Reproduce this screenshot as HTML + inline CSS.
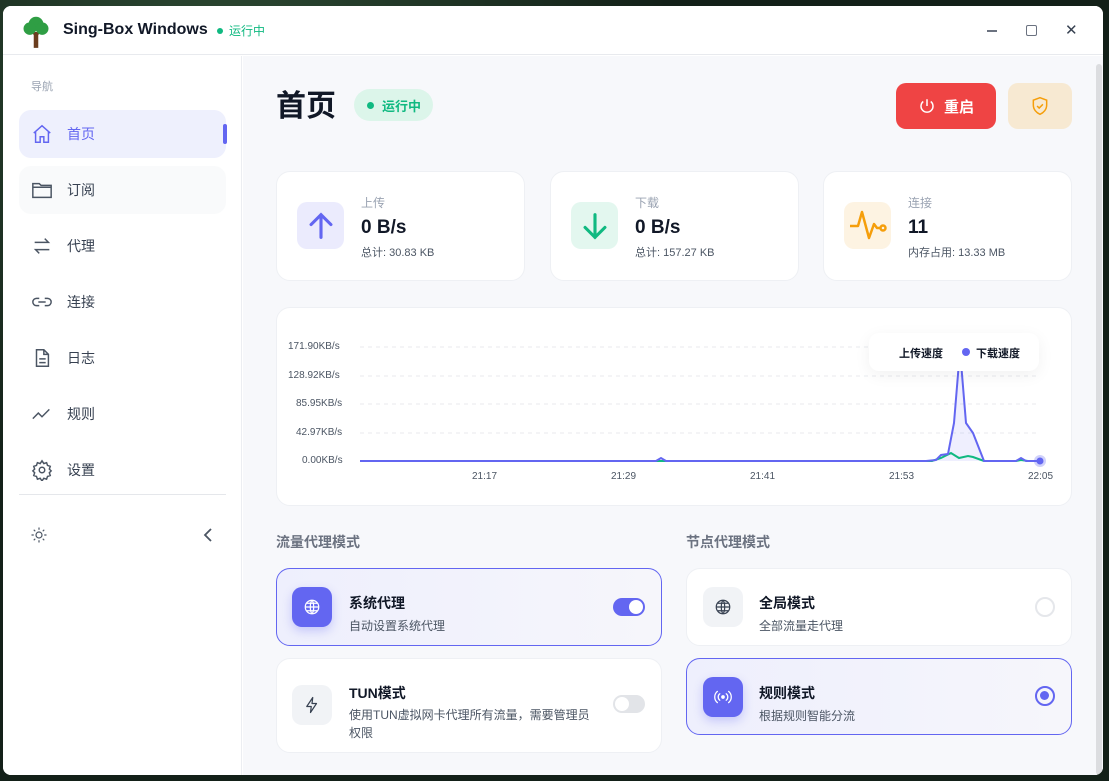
<!DOCTYPE html>
<html><head><meta charset="utf-8"><style>
*{box-sizing:border-box;margin:0;padding:0}
body{width:1109px;height:781px;overflow:hidden;background:#1b2a20;font-family:"Liberation Sans","Noto Sans CJK SC",sans-serif;position:relative}
.bgpat{position:absolute;inset:0;background:radial-gradient(circle at 20% 10%,#2d4a33 0,#132018 40%),#14221a}
.win{position:absolute;left:3px;top:6px;width:1100px;height:769px;background:#fff;border-radius:8px;overflow:hidden}
.title{position:absolute;left:0;top:0;width:100%;height:49px;border-bottom:1px solid #e8eaee;background:#fff}
.side{position:absolute;left:0;top:50px;width:239px;bottom:0;background:#fff;border-right:1px solid #eceef2}
.main{position:absolute;left:240px;top:50px;right:0;bottom:0;background:#f7f8fb}
.abs{position:absolute}
.nav{position:absolute;left:16px;width:207px;height:48px;border-radius:12px;display:flex;align-items:center;font-size:14px;color:#374151}
.nav svg{position:absolute;left:12px}
.nav span{position:absolute;left:48px}
.card{position:absolute;background:#fff;border-radius:14px;border:1px solid #eef0f4}
.ic{position:absolute;border-radius:10px;display:flex;align-items:center;justify-content:center}
.lab{font-size:12px;color:#9aa3b2}
.val{font-size:19px;font-weight:bold;color:#111827}
.sub{font-size:11px;color:#4b5563}
.ax{position:absolute;font-size:10px;color:#4b5563}
</style></head><body>
<div class="bgpat"></div>
<div class="win">
 <div class="title">
  <svg class="abs" style="left:18px;top:9px" width="30" height="34" viewBox="0 0 26 30"><path d="M11 15h4v14h-4z" fill="#6b3d1e"/><path d="M13 18l-4-3M13 18l4-3" stroke="#6b3d1e" stroke-width="1.5"/><circle cx="13" cy="8" r="6.5" fill="#2f9e44"/><circle cx="7.5" cy="12" r="5.5" fill="#2f9e44"/><circle cx="18.5" cy="12" r="5.5" fill="#2f9e44"/></svg>
  <div class="abs" style="left:60px;top:15px;font-size:16px;font-weight:bold;color:#111827">Sing-Box Windows</div>
  <div class="abs" style="left:214px;top:22px;width:6px;height:6px;border-radius:50%;background:#10b981"></div>
  <div class="abs" style="left:226px;top:16px;font-size:12px;color:#10b981">运行中</div>
  <div class="abs" style="left:984px;top:24px;width:10px;height:1.5px;background:#6b7280"></div>
  <div class="abs" style="left:1023px;top:19px;width:11px;height:11px;border:1.5px solid #6b7280;border-radius:2px"></div>
  <div class="abs" style="left:1062px;top:15px;font-size:15px;color:#374151">✕</div>
 </div>
 <div class="side">
  <div class="abs lab" style="left:28px;top:22px;font-size:11px">导航</div>
  <div class="nav" style="top:54px;background:#eef0fd;color:#6366f1"><svg width="22" height="22" viewBox="0 0 24 24" fill="none" stroke="#6366f1" stroke-width="1.6"><path d="M3 11l9-8 9 8M5 9v12h5v-6h4v6h5V9"/></svg><span>首页</span><div class="abs" style="right:-1px;top:14px;width:4px;height:20px;border-radius:2px;background:#6366f1"></div></div>
  <div class="nav" style="top:110px;background:#f9fafb"><svg width="22" height="22" viewBox="0 0 24 24" fill="none" stroke="#4b5563" stroke-width="1.6"><path d="M2 5h7l2 2h11v13H2zM2 9h20"/></svg><span>订阅</span></div>
  <div class="nav" style="top:166px"><svg width="22" height="22" viewBox="0 0 24 24" fill="none" stroke="#4b5563" stroke-width="1.6"><path d="M4 8h15l-4-4M20 16H5l4 4"/></svg><span>代理</span></div>
  <div class="nav" style="top:222px"><svg width="22" height="22" viewBox="0 0 24 24" fill="none" stroke="#4b5563" stroke-width="1.6"><path d="M9 8H6a4 4 0 000 8h3M15 8h3a4 4 0 010 8h-3M8 12h8"/></svg><span>连接</span></div>
  <div class="nav" style="top:278px"><svg width="22" height="22" viewBox="0 0 24 24" fill="none" stroke="#4b5563" stroke-width="1.6"><path d="M6 3h8l5 5v13H6zM14 3v5h5M9 13h7M9 17h7"/></svg><span>日志</span></div>
  <div class="nav" style="top:334px"><svg width="22" height="22" viewBox="0 0 24 24" fill="none" stroke="#4b5563" stroke-width="1.6"><path d="M2 17l6-6 4 4 8-8"/></svg><span>规则</span></div>
  <div class="nav" style="top:390px"><svg width="22" height="22" viewBox="0 0 24 24" fill="none" stroke="#4b5563" stroke-width="1.6"><circle cx="12" cy="12" r="3"/><path d="M12 2l2 3 3-1 1 3 3 1-1 3 2 2-2 2 1 3-3 1-1 3-3-1-2 3-2-3-3 1-1-3-3-1 1-3-2-2 2-2-1-3 3-1 1-3 3 1z"/></svg><span>设置</span></div>
  <div class="abs" style="left:16px;top:438px;width:207px;height:1px;background:#e5e7eb"></div>
  <svg class="abs" style="left:27px;top:470px" width="18" height="18" viewBox="0 0 24 24" fill="none" stroke="#4b5563" stroke-width="1.6"><circle cx="12" cy="12" r="4"/><path d="M12 2v3M12 19v3M2 12h3M19 12h3M5 5l2 2M17 17l2 2M5 19l2-2M17 7l2-2"/></svg>
  <svg class="abs" style="left:198px;top:471px" width="14" height="16" viewBox="0 0 14 16" fill="none" stroke="#4b5563" stroke-width="1.8"><path d="M10 2L4 8l6 6"/></svg>
 </div>
 <div class="main">
  <div class="abs" style="left:33px;top:25px;font-size:30px;font-weight:bold;color:#111827">首页</div>
  <div class="abs" style="left:111px;top:33px;width:79px;height:32px;border-radius:16px;background:#dcf5ea"></div>
  <div class="abs" style="left:124px;top:46px;width:7px;height:7px;border-radius:50%;background:#10b981"></div>
  <div class="abs" style="left:139px;top:40px;font-size:13px;font-weight:bold;color:#10b981">运行中</div>
  <div class="abs" style="left:653px;top:27px;width:100px;height:46px;border-radius:10px;background:#ef4444;color:#fff;font-size:15px;font-weight:bold;display:flex;align-items:center;justify-content:center;gap:8px"><svg width="18" height="18" viewBox="0 0 24 24" fill="none" stroke="#fff" stroke-width="2"><path d="M12 3v9M7 6a8 8 0 1010 0"/></svg>重启</div>
  <div class="abs" style="left:765px;top:27px;width:64px;height:46px;border-radius:10px;background:#f7e9d2;display:flex;align-items:center;justify-content:center"><svg width="20" height="20" viewBox="0 0 24 24" fill="none" stroke="#f59e0b" stroke-width="1.8"><path d="M12 2l8 3v6c0 5-3.5 9-8 11-4.5-2-8-6-8-11V5z"/><path d="M8.5 12l2.5 2.5 4.5-4.5"/></svg></div>

  <div class="card" style="left:33px;top:115px;width:249px;height:110px">
   <div class="ic" style="left:20px;top:30px;width:47px;height:47px;background:#ebebfd"><svg width="34" height="34" viewBox="0 0 24 24" fill="none" stroke="#6366f1" stroke-width="2.2" stroke-linecap="round"><path d="M12 20V4M5 11l7-7 7 7"/></svg></div>
   <div class="abs lab" style="left:84px;top:22px">上传</div><div class="abs val" style="left:84px;top:45px">0 B/s</div><div class="abs sub" style="left:84px;top:72px">总计: 30.83 KB</div>
  </div>
  <div class="card" style="left:307px;top:115px;width:249px;height:110px">
   <div class="ic" style="left:20px;top:30px;width:47px;height:47px;background:#e3f7ef"><svg width="34" height="34" viewBox="0 0 24 24" fill="none" stroke="#10b981" stroke-width="2.2" stroke-linecap="round"><path d="M12 4v16M5 13l7 7 7-7"/></svg></div>
   <div class="abs lab" style="left:84px;top:22px">下载</div><div class="abs val" style="left:84px;top:45px">0 B/s</div><div class="abs sub" style="left:84px;top:72px">总计: 157.27 KB</div>
  </div>
  <div class="card" style="left:580px;top:115px;width:249px;height:110px">
   <div class="ic" style="left:20px;top:30px;width:47px;height:47px;background:#fdf3e2"><svg width="44" height="44" viewBox="0 0 44 44" fill="none" stroke="#f59e0b" stroke-width="2.5" stroke-linejoin="round"><path d="M4 22h8l4-14 7 26 5-14 3 4h4"/><circle cx="37" cy="24" r="2.5"/></svg></div>
   <div class="abs lab" style="left:84px;top:22px">连接</div><div class="abs val" style="left:84px;top:45px">11</div><div class="abs sub" style="left:84px;top:72px">内存占用: 13.33 MB</div>
  </div>

  <div class="card" style="left:33px;top:251px;width:796px;height:199px"></div>
  <svg class="abs" style="left:33px;top:251px" width="796" height="199">
   <g stroke="#e8eaee" stroke-dasharray="4 4"><path d="M84 40H764M84 69H764M84 97H764M84 126H764"/></g>
   <path d="M84 154 L380 154 L385 151 L390 154 L650 154 L660 153 L665 148 L672 147 L678 116 L684 43 L690 116 L697 126 L708 154 L740 154 L745 151 L750 154 L764 154 Z" fill="#6366f1" fill-opacity=".1"/>
   <path d="M84 154 L640 154 L656 154 L665 151 L675 146 L683 151 L692 149 L697 150 L708 154 L740 154 L745 153 L752 154 L764 154" fill="none" stroke="#10b981" stroke-width="2"/>
   <path d="M84 154 L380 154 L385 151 L390 154 L650 154 L660 153 L665 148 L672 147 L678 116 L684 43 L690 116 L697 126 L708 154 L740 154 L745 151 L750 154 L764 154" fill="none" stroke="#6366f1" stroke-width="2"/>
   <circle cx="764" cy="154" r="6" fill="#6366f1" fill-opacity=".3"/><circle cx="764" cy="154" r="3.5" fill="#6366f1"/>
  </svg>
  <div class="ax" style="left:45px;top:285px">171.90KB/s</div>
  <div class="ax" style="left:45px;top:314px">128.92KB/s</div>
  <div class="ax" style="left:53px;top:342px">85.95KB/s</div>
  <div class="ax" style="left:53px;top:371px">42.97KB/s</div>
  <div class="ax" style="left:59px;top:399px">0.00KB/s</div>
  <div class="ax" style="left:229px;top:415px">21:17</div>
  <div class="ax" style="left:368px;top:415px">21:29</div>
  <div class="ax" style="left:507px;top:415px">21:41</div>
  <div class="ax" style="left:646px;top:415px">21:53</div>
  <div class="ax" style="left:785px;top:415px">22:05</div>
  <div class="abs" style="left:626px;top:277px;width:170px;height:38px;border-radius:10px;background:#fff;box-shadow:0 4px 16px rgba(0,0,0,.06);font-size:11px;font-weight:bold;color:#111827">
   <span class="abs" style="left:30px;top:12px">上传速度</span><span class="abs" style="left:93px;top:15px;width:8px;height:8px;border-radius:50%;background:#6366f1"></span><span class="abs" style="left:107px;top:12px">下载速度</span>
  </div>

  <div class="abs" style="left:33px;top:476px;font-size:14px;font-weight:bold;color:#6b7280">流量代理模式</div>
  <div class="abs" style="left:443px;top:476px;font-size:14px;font-weight:bold;color:#6b7280">节点代理模式</div>

  <div class="card" style="left:33px;top:512px;width:386px;height:78px;background:linear-gradient(90deg,#eeeffd,#f6f6fb);border-color:#6366f1"></div>
  <div class="ic" style="left:49px;top:531px;width:40px;height:40px;background:#6366f1;box-shadow:0 4px 10px rgba(99,102,241,.3)"><svg width="18" height="18" viewBox="0 0 24 24" fill="none" stroke="#fff" stroke-width="1.6"><circle cx="12" cy="12" r="9"/><path d="M3 12h18M12 3c3 3 3 15 0 18M12 3c-3 3-3 15 0 18M5 7h14M5 17h14"/></svg></div>
  <div class="abs" style="left:106px;top:537px;font-size:14px;font-weight:bold;color:#111827">系统代理</div>
  <div class="abs" style="left:106px;top:561px;font-size:12px;color:#4b5563">自动设置系统代理</div>
  <div class="abs" style="left:370px;top:542px;width:32px;height:18px;border-radius:9px;background:#6366f1"><div class="abs" style="left:16px;top:2px;width:14px;height:14px;border-radius:50%;background:#fff"></div></div>

  <div class="card" style="left:33px;top:602px;width:386px;height:95px"></div>
  <div class="ic" style="left:49px;top:629px;width:40px;height:40px;background:#f1f3f6"><svg width="18" height="18" viewBox="0 0 24 24" fill="none" stroke="#374151" stroke-width="1.6" stroke-linejoin="round"><path d="M13 2L5 14h6l-1 8 8-12h-6z"/></svg></div>
  <div class="abs" style="left:106px;top:627px;font-size:14px;font-weight:bold;color:#111827">TUN模式</div>
  <div class="abs" style="left:106px;top:650px;width:250px;font-size:12px;line-height:18px;color:#4b5563">使用TUN虚拟网卡代理所有流量，需要管理员权限</div>
  <div class="abs" style="left:370px;top:639px;width:32px;height:18px;border-radius:9px;background:#e2e4e8"><div class="abs" style="left:2px;top:2px;width:14px;height:14px;border-radius:50%;background:#fff"></div></div>

  <div class="card" style="left:443px;top:512px;width:386px;height:78px"></div>
  <div class="ic" style="left:460px;top:531px;width:40px;height:40px;background:#f1f3f6"><svg width="18" height="18" viewBox="0 0 24 24" fill="none" stroke="#374151" stroke-width="1.6"><circle cx="12" cy="12" r="9"/><path d="M3 12h18M12 3c3 3 3 15 0 18M12 3c-3 3-3 15 0 18M5 7h14M5 17h14"/></svg></div>
  <div class="abs" style="left:516px;top:537px;font-size:14px;font-weight:bold;color:#111827">全局模式</div>
  <div class="abs" style="left:516px;top:561px;font-size:12px;color:#4b5563">全部流量走代理</div>
  <div class="abs" style="left:792px;top:541px;width:20px;height:20px;border-radius:50%;border:2px solid #e5e7eb"></div>

  <div class="card" style="left:443px;top:602px;width:386px;height:77px;background:linear-gradient(90deg,#eeeffd,#f6f6fb);border-color:#6366f1"></div>
  <div class="ic" style="left:460px;top:621px;width:40px;height:40px;background:#6366f1;box-shadow:0 4px 10px rgba(99,102,241,.3)"><svg width="20" height="16" viewBox="0 0 24 20" fill="none" stroke="#fff" stroke-width="1.6" stroke-linecap="round"><circle cx="12" cy="10" r="1.5" fill="#fff"/><path d="M8 6a5 5 0 000 8M16 6a5 5 0 010 8M5 3a9 9 0 000 14M19 3a9 9 0 010 14"/></svg></div>
  <div class="abs" style="left:516px;top:627px;font-size:14px;font-weight:bold;color:#111827">规则模式</div>
  <div class="abs" style="left:516px;top:651px;font-size:12px;color:#4b5563">根据规则智能分流</div>
  <div class="abs" style="left:792px;top:630px;width:20px;height:20px;border-radius:50%;border:2.5px solid #6366f1"><div class="abs" style="left:3px;top:3px;width:9px;height:9px;border-radius:50%;background:#6366f1"></div></div>

  <div class="abs" style="left:853px;top:8px;width:6px;bottom:0;border-radius:3px;background:#dcdde0"></div>
 </div>
</div>
</body></html>
